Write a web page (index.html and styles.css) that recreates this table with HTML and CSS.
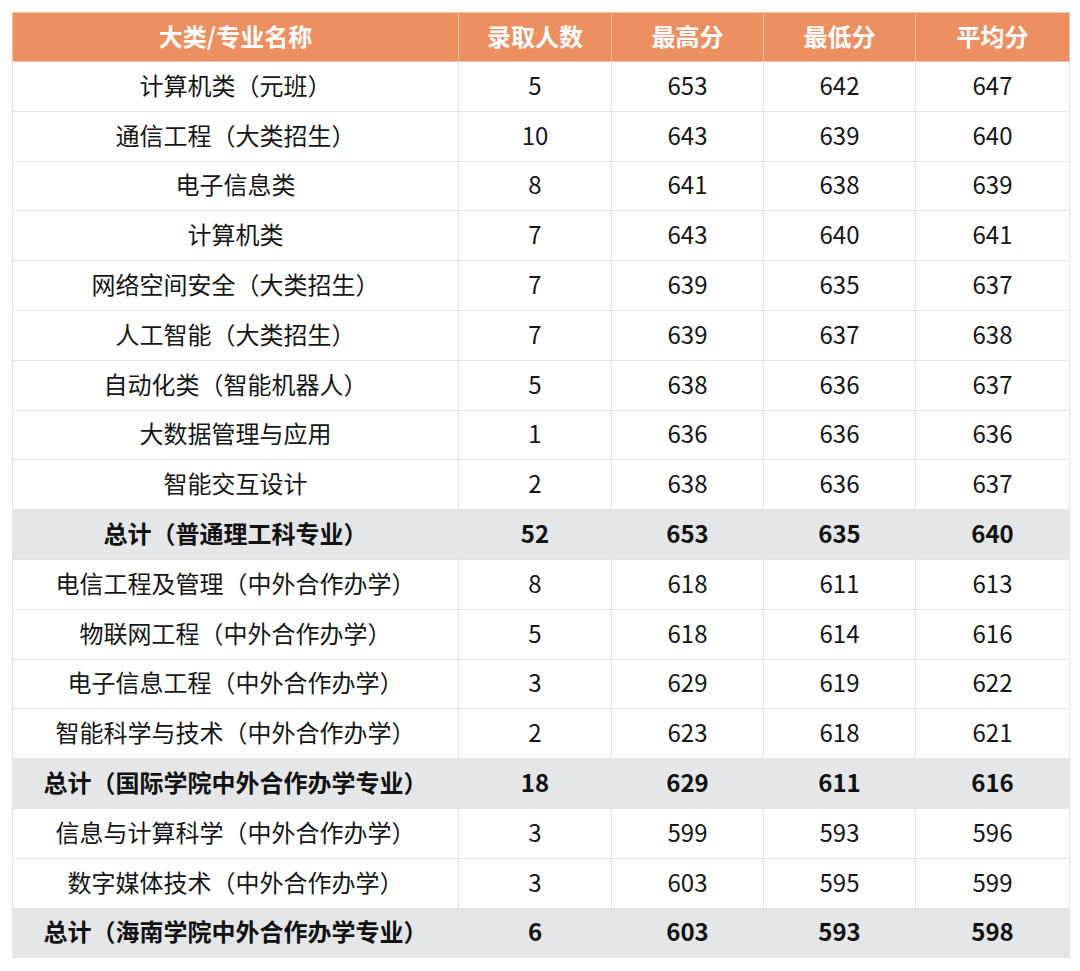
FILE: index.html
```html
<!DOCTYPE html>
<html lang="zh">
<head>
<meta charset="utf-8">
<link rel="stylesheet" href="styles.css">
</head>
<body>
<div class="wrap">
<table class="score">
<colgroup><col class="c1"><col class="c2"><col class="c3"><col class="c4"><col class="c5"></colgroup>
<thead>
<tr><th>大类/专业名称</th><th>录取人数</th><th>最高分</th><th>最低分</th><th>平均分</th></tr>
</thead>
<tbody>
<tr><td>计算机类（元班）</td><td>5</td><td>653</td><td>642</td><td>647</td></tr>
<tr><td>通信工程（大类招生）</td><td>10</td><td>643</td><td>639</td><td>640</td></tr>
<tr><td>电子信息类</td><td>8</td><td>641</td><td>638</td><td>639</td></tr>
<tr><td>计算机类</td><td>7</td><td>643</td><td>640</td><td>641</td></tr>
<tr><td>网络空间安全（大类招生）</td><td>7</td><td>639</td><td>635</td><td>637</td></tr>
<tr><td>人工智能（大类招生）</td><td>7</td><td>639</td><td>637</td><td>638</td></tr>
<tr><td>自动化类（智能机器人）</td><td>5</td><td>638</td><td>636</td><td>637</td></tr>
<tr><td>大数据管理与应用</td><td>1</td><td>636</td><td>636</td><td>636</td></tr>
<tr><td>智能交互设计</td><td>2</td><td>638</td><td>636</td><td>637</td></tr>
<tr class="total"><td>总计（普通理工科专业）</td><td>52</td><td>653</td><td>635</td><td>640</td></tr>
<tr><td>电信工程及管理（中外合作办学）</td><td>8</td><td>618</td><td>611</td><td>613</td></tr>
<tr><td>物联网工程（中外合作办学）</td><td>5</td><td>618</td><td>614</td><td>616</td></tr>
<tr><td>电子信息工程（中外合作办学）</td><td>3</td><td>629</td><td>619</td><td>622</td></tr>
<tr><td>智能科学与技术（中外合作办学）</td><td>2</td><td>623</td><td>618</td><td>621</td></tr>
<tr class="total"><td>总计（国际学院中外合作办学专业）</td><td>18</td><td>629</td><td>611</td><td>616</td></tr>
<tr><td>信息与计算科学（中外合作办学）</td><td>3</td><td>599</td><td>593</td><td>596</td></tr>
<tr><td>数字媒体技术（中外合作办学）</td><td>3</td><td>603</td><td>595</td><td>599</td></tr>
<tr class="total"><td>总计（海南学院中外合作办学专业）</td><td>6</td><td>603</td><td>593</td><td>598</td></tr>
</tbody>
</table>
</div>
</body>
</html>
```
FILE: styles.css
```css
html, body {
  margin: 0;
  padding: 0;
  background: #ffffff;
}
.wrap {
  padding: 12px;
}
.score {
  width: 1057px;
  border-collapse: collapse;
  table-layout: fixed;
  font-family: "Noto Sans CJK SC", "Noto Sans", sans-serif;
  font-size: 24px;
  color: #161616;
}
.c1 { width: 446px; }
.c2 { width: 153px; }
.c3 { width: 152px; }
.c4 { width: 152px; }
.c5 { width: 154px; }
.score th,
.score td {
  border: 1px solid #e3e3e3;
  text-align: center;
  vertical-align: middle;
  padding: 0 0 3px 0;
  line-height: 1;
}
.score th {
  height: 45px;
  background: #ec8f61;
  color: #ffffff;
  font-weight: 700;
  border-color: #efc3ab;
}
.score td {
  height: 45.8px;
}
.score tr.total td {
  background: #e5e6e8;
  font-weight: 700;
  color: #111111;
}
```
